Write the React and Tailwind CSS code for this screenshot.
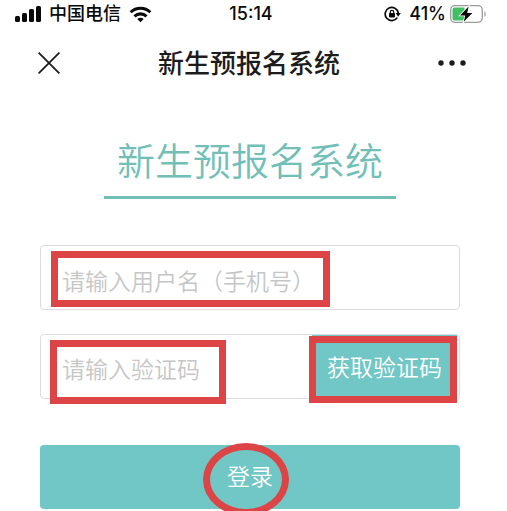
import { useState } from "react";

function SignalIcon() {
  return (
    <svg width="26" height="16" viewBox="0 0 26 16" fill="#0a0a0a" aria-hidden="true">
      <rect x="0" y="10" width="5" height="6" rx="1.5" />
      <rect x="7" y="7" width="5" height="9" rx="1.5" />
      <rect x="14" y="3" width="5" height="13" rx="1.5" />
      <rect x="21" y="0" width="5" height="16" rx="1.5" />
    </svg>
  );
}

function WifiIcon() {
  return (
    <svg width="23" height="17" viewBox="0 0 24 18" fill="none" stroke="#0a0a0a" strokeWidth="3.2" aria-hidden="true">
      <path d="M1.6 6.6a15 15 0 0 1 20.8 0" />
      <path d="M5.6 10.9a9.3 9.3 0 0 1 12.8 0" />
      <path d="M12 17.2l-3.4-3.5a4.9 4.9 0 0 1 6.8 0z" fill="#0a0a0a" stroke="none" />
    </svg>
  );
}

function RotationLockIcon() {
  return (
    <svg width="17" height="16" viewBox="0 0 17 16" fill="none" stroke="#0a0a0a" aria-hidden="true">
      <path d="M13.3 11.6A6.6 6.6 0 1 1 14.3 7" strokeWidth="1.7" />
      <path d="M11.6 7h5.2l-2.6 3.7z" fill="#0a0a0a" stroke="none" />
      <path d="M6.3 7.4V6a1.7 1.7 0 0 1 3.4 0v1.4" strokeWidth="1.2" />
      <rect x="5" y="7" width="6" height="4.4" rx="0.8" fill="#0a0a0a" stroke="none" />
    </svg>
  );
}

function BatteryIcon() {
  return (
    <svg width="37" height="18" viewBox="0 0 37 18" fill="none" aria-hidden="true">
      <rect x="0.7" y="0.7" width="31.6" height="16.6" rx="4.2" stroke="#9b9b9b" strokeWidth="1.3" />
      <path d="M34.4 6.2c1.9.8 1.9 4.8 0 5.6z" fill="#a3a3a3" />
      <path d="M4.5 2.5h10v13h-10a2 2 0 0 1-2-2v-9a2 2 0 0 1 2-2z" fill="#41bf62" />
      <path d="M18.6 1.6L10 10.4h5.2l-1.4 6.4 8.6-8.9h-5.2z" fill="#0a0a0a" stroke="#fff" strokeWidth="1.6" paintOrder="stroke" />
    </svg>
  );
}

function CloseIcon() {
  return (
    <svg width="22" height="22" viewBox="0 0 22 22" stroke="#1c1c1c" strokeWidth="1.8" aria-hidden="true">
      <path d="M0.6 0.6l20.8 20.8M21.4 0.6L0.6 21.4" />
    </svg>
  );
}

function MoreIcon() {
  return (
    <svg width="28" height="6" viewBox="0 0 28 6" fill="#1c1c1c" aria-hidden="true">
      <circle cx="3" cy="3" r="2.7" />
      <circle cx="14" cy="3" r="2.7" />
      <circle cx="25" cy="3" r="2.7" />
    </svg>
  );
}

export default function App() {
  const [username, setUsername] = useState("");
  const [code, setCode] = useState("");

  return (
    <div className="min-h-screen overflow-hidden bg-white font-['Inter','Noto_Sans_CJK_SC',sans-serif] text-[#0a0a0a]">
      {/* Status bar */}
      <div className="grid grid-cols-[1fr_auto_1fr] items-center h-7 pl-[15px] pr-5 text-lg leading-7 font-medium">
        <div className="flex items-center gap-2">
          <SignalIcon />
          <span>中国电信</span>
          <WifiIcon />
        </div>
        <span>15:14</span>
        <div className="flex items-center justify-end gap-1">
          <RotationLockIcon />
          <span className="ml-1">41%</span>
          <BatteryIcon />
        </div>
      </div>

      {/* Title bar */}
      <header className="flex items-center justify-between h-[70px] pl-[38px] pr-[41px]">
        <button type="button" aria-label="关闭">
          <CloseIcon />
        </button>
        <h1 className="pt-0.5 text-[26px] leading-10 font-medium text-[#1c1c1c]">新生预报名系统</h1>
        <button type="button" aria-label="更多">
          <MoreIcon />
        </button>
      </header>

      <main className="pl-10 pr-[47px] pt-9">
        <h2 className="w-fit mx-auto px-[13px] pb-2 border-b-3 border-[#72bfb8] text-[38px] leading-[54px] font-[350] text-[#72bfb8]">
          新生预报名系统
        </h2>

        <form className="mt-[46px]" onSubmit={(e) => e.preventDefault()}>
          {/* Username */}
          <div className="relative">
            <input
              type="text"
              aria-label="用户名"
              placeholder="请输入用户名（手机号）"
              value={username}
              onChange={(e) => setUsername(e.target.value)}
              className="block w-full h-[65px] px-[21px] pt-2 rounded border border-[#dcdcdf] text-[23px] font-[350] placeholder:text-[#c6c6c6] outline-none"
            />
            <div className="absolute left-[11px] top-1.5 w-[279px] h-14 border-7 border-[#dc4446] pointer-events-none"></div>
          </div>

          {/* Verification code */}
          <div className="relative flex mt-6 h-[65px] rounded border border-[#dcdcdf]">
            <input
              type="text"
              aria-label="验证码"
              placeholder="请输入验证码"
              value={code}
              onChange={(e) => setCode(e.target.value)}
              className="flex-1 min-w-0 px-[21px] pt-2 text-[23px] font-[350] placeholder:text-[#c6c6c6] outline-none"
            />
            <button type="button" className="w-[145px] mr-0.5 pt-1 bg-[#71c7c5] text-[23px] font-[350] text-white">
              获取验证码
            </button>
            <div className="absolute left-[9px] top-[5px] w-44 h-16 border-7 border-[#dc4446] pointer-events-none"></div>
            <div className="absolute right-0.5 top-px w-[148px] h-[67px] border-7 border-[#dc4446] pointer-events-none"></div>
          </div>

          {/* Submit */}
          <div className="relative mt-[46px]">
            <button type="submit" className="block w-full h-16 rounded bg-[#71c7c5] text-[23px] font-[350] text-white">
              登录
            </button>
            <div className="absolute left-1/2 -top-0.5 -ml-[47px] w-[86px] h-[73px] rounded-[50%] border-7 border-[#dc4446] pointer-events-none"></div>
          </div>
        </form>
      </main>
    </div>
  );
}
